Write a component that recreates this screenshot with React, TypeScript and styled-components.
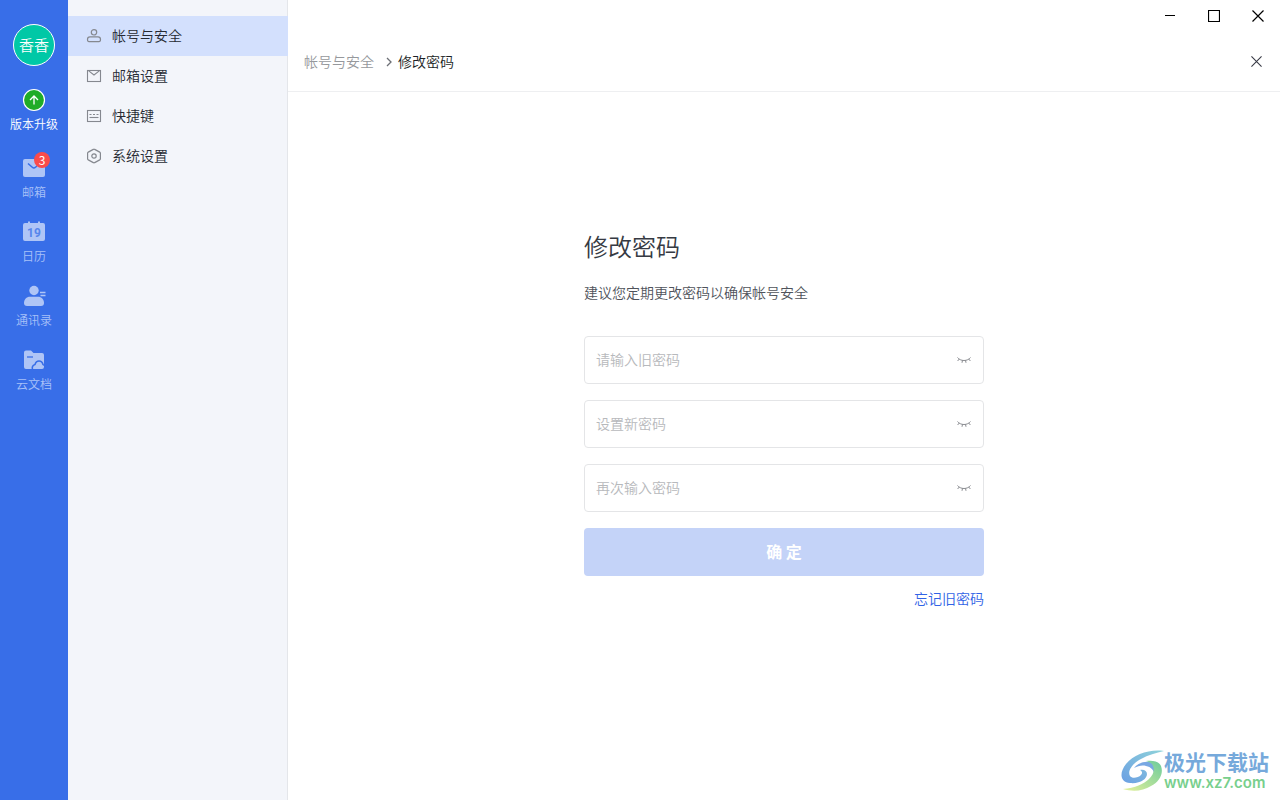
import React from 'react';
import styled, { createGlobalStyle } from 'styled-components';

const GlobalStyle = createGlobalStyle`
  * { box-sizing: border-box; }
  body {
    margin: 0;
    background: #fff;
    color: #262a33;
    font: 350 14px/20px "Noto Sans CJK SC", "Liberation Sans", sans-serif;
  }
  button, input { font: inherit; color: inherit; }
  button { padding: 0; border: 0; background: none; cursor: pointer; }
  a { text-decoration: none; }
  svg { display: block; flex: none; }
`;

const Page = styled.div`
  display: flex;
  min-height: 100vh;
`;

const Rail = styled.nav`
  flex: none;
  width: 68px;
  padding-top: 24px;
  display: flex;
  flex-direction: column;
  align-items: center;
  gap: 20px;
  background: #386ee8;
`;

const Avatar = styled.button`
  width: 42px;
  height: 42px;
  margin-bottom: 2px;
  border: 1px solid #fff;
  border-radius: 50%;
  background: #00c8a6;
  color: #fff;
  font-size: 15px;
  line-height: 38px;
`;

const RailButton = styled.button<{ $bright?: boolean }>`
  position: relative;
  display: flex;
  flex-direction: column;
  align-items: center;
  gap: 4px;
  width: 100%;
  margin-bottom: ${(p) => (p.$bright ? '4px' : '0')};
  color: ${(p) => (p.$bright ? '#fff' : '#a8c1f8')};
  font-size: 12px;
  line-height: 16px;
`;

const Badge = styled.span`
  position: absolute;
  top: -4px;
  left: 34px;
  width: 16px;
  height: 16px;
  border-radius: 8px;
  background: #fa4b4b;
  color: #fff;
  font-weight: 400;
`;

const Menu = styled.nav`
  flex: none;
  width: 220px;
  padding-top: 16px;
  background: #f3f5fa;
  box-shadow: inset -1px 0 #e4e6ea;
`;

const MenuItem = styled.button<{ $active?: boolean }>`
  display: flex;
  align-items: center;
  gap: 10px;
  width: 100%;
  height: 40px;
  padding-left: 18px;
  background: ${(p) => (p.$active ? '#d3e0fd' : 'transparent')};
  text-align: left;

  svg { color: #85888f; }
  span { padding-bottom: 2px; }
`;

const Content = styled.main`
  flex: 1;
  min-width: 0;
`;

const WindowBar = styled.div`
  display: flex;
  justify-content: flex-end;
  height: 32px;
`;

const WindowButton = styled.button`
  display: grid;
  place-items: center;
  width: 44px;
  color: #000;
`;

const Header = styled.header`
  display: flex;
  align-items: center;
  justify-content: space-between;
  height: 60px;
  padding: 0 16px;
  border-bottom: 1px solid #eeeff1;
`;

const Breadcrumb = styled.div`
  display: flex;
  align-items: center;
  gap: 10px;
  color: #1c1f26;

  a { color: #96989c; }
  a, span { padding-bottom: 2px; }
  svg { margin-right: -4px; color: #6c6f75; }
`;

const CloseButton = styled.button`
  display: grid;
  place-items: center;
  width: 16px;
  height: 16px;
  color: #383a45;
`;

const Form = styled.form`
  display: flex;
  flex-direction: column;
  gap: 16px;
  max-width: 400px;
  margin: 136px auto 0;
`;

const Title = styled.h1`
  margin: 0;
  color: #363a43;
  font-size: 24px;
  line-height: 36px;
  font-weight: 350;
`;

const Hint = styled.p`
  margin: 2px 0 18px;
  color: #4f535b;
`;

const Field = styled.div`
  display: flex;
  align-items: center;
  height: 48px;
  padding: 0 12px 0 11px;
  border: 1px solid #e4e5e7;
  border-radius: 4px;
`;

const Input = styled.input`
  flex: 1;
  min-width: 0;
  height: 100%;
  padding: 0 0 2px;
  border: 0;
  outline: 0;
  background: none;

  &::placeholder { color: #b7b9bc; opacity: 1; }
`;

const EyeButton = styled.button`
  color: #8b8d92;
`;

const Submit = styled.button`
  height: 48px;
  padding-bottom: 2px;
  border-radius: 4px;
  background: #c4d3f8;
  color: #fff;
  font-size: 16px;
  font-weight: 700;
`;

const Forgot = styled.a`
  align-self: flex-end;
  margin-top: -4px;
  color: #3163e6;
`;

const Watermark = styled.div`
  position: absolute;
  right: 11px;
  bottom: 7px;
  display: flex;
  align-items: center;
`;

const WatermarkText = styled.div`
  display: flex;
  flex-direction: column;
  margin-left: -1px;
  color: #76a9db;
  font-size: 21px;
  line-height: 24px;
  font-weight: 700;

  span {
    color: #78cf8d;
    font-family: Inter, "Liberation Sans", sans-serif;
    font-size: 15px;
    line-height: 20px;
    font-weight: 600;
  }
`;

const UpgradeIcon = () => (
  <svg width="24" height="24" viewBox="0 0 24 24" fill="none" stroke="#fff">
    <circle cx="12" cy="12" r="10.5" fill="#1fac27" strokeWidth="1.2" />
    <path d="M12 16.5V8.2M8 12l4-4 4 4" strokeWidth="1.3" />
  </svg>
);

const MailIcon = () => (
  <svg width="24" height="24" viewBox="0 0 24 24" fill="none">
    <rect x="1" y="3" width="22" height="18" rx="2" fill="#afc5f6" />
    <path d="M6 7.5l4.300 3.800a2.400 2.400 0 0 0 3.200 0L15 10" stroke="#386ee8" strokeWidth="1.500" />
  </svg>
);

const CalendarIcon = () => (
  <svg width="24" height="24" viewBox="0 0 24 24" fill="#afc5f6">
    <path d="M3 3h3V1.500h2V3h8V1.500h2V3h3a2 2 0 0 1 2 2v14a2 2 0 0 1-2 2H3a2 2 0 0 1-2-2V5a2 2 0 0 1 2-2z" />
    <text x="12" y="17" textAnchor="middle" fill="#5786ec" fontFamily="Roboto, sans-serif" fontSize="12" fontWeight="700">19</text>
  </svg>
);

const ContactsIcon = () => (
  <svg width="24" height="24" viewBox="0 0 24 24" fill="#afc5f6">
    <circle cx="12" cy="6.500" r="4.700" />
    <path d="M8 12.800h8c3.500 0 6 2.600 6 6.200 0 1.900-1 3-3 3H5c-2 0-3-1.100-3-3 0-3.600 2.500-6.200 6-6.200z" />
    <path d="M18 8.500h5.500M18.500 11.500h5" stroke="#afc5f6" strokeWidth="1.300" />
  </svg>
);

const CloudDocIcon = () => (
  <svg width="24" height="24" viewBox="0 0 24 24" fill="none">
    <path d="M2 4.500a2 2 0 0 1 2-2h5l2.500 2.500H20a2 2 0 0 1 2 2v12a2 2 0 0 1-2 2H4a2 2 0 0 1-2-2z" fill="#afc5f6" />
    <path d="M5 9h6" stroke="#386ee8" strokeWidth="1.300" />
    <path d="M10.500 21.500c-.7-2.500.7-4.400 2.500-5 .6-2.200 2-3.500 4-3.500 2.200 0 3.500 1.500 4 3.500l1.500 1" stroke="#386ee8" strokeWidth="1.500" />
  </svg>
);

const AccountIcon = () => (
  <svg width="16" height="16" viewBox="0 0 16 16" fill="none" stroke="currentColor" strokeWidth="1.200">
    <circle cx="8" cy="4.300" r="2.700" />
    <path d="M4 8.800h8c1.600 0 2.500 1 2.500 2.700 0 1.500-.5 2.200-1.500 2.200H3c-1 0-1.500-.7-1.500-2.200 0-1.700.9-2.700 2.500-2.700z" />
  </svg>
);

const EnvelopeIcon = () => (
  <svg width="16" height="16" viewBox="0 0 16 16" fill="none" stroke="currentColor" strokeWidth="1.100">
    <rect x="1.500" y="2.500" width="13" height="11" />
    <path d="M2.700 2.900L8 7l5.300-4.100" />
  </svg>
);

const KeyboardIcon = () => (
  <svg width="16" height="16" viewBox="0 0 16 16" fill="none" stroke="currentColor" strokeWidth="1.100">
    <rect x="1.500" y="2.500" width="13" height="11" />
    <path d="M3.500 6.500h9" strokeDasharray="2 1.500" />
    <path d="M3.500 9.500h9" />
  </svg>
);

const SystemIcon = () => (
  <svg width="16" height="16" viewBox="0 0 16 16" fill="none" stroke="currentColor" strokeWidth="1.200">
    <path d="M7.300 1.400q.7-.4 1.400 0l5 2.700q.7.400.7 1.200v5.400q0 .8-.7 1.200l-5 2.700q-.7.400-1.400 0l-5-2.700q-.7-.4-.7-1.200V5.300q0-.8.7-1.200z" />
    <circle cx="8" cy="8" r="2.200" />
  </svg>
);

const CrossIcon = ({ size }: { size: number }) => (
  <svg width={size} height={size} viewBox="0 0 12 12" fill="none" stroke="currentColor" strokeWidth="1.200">
    <path d="M.5.5l11 11M11.500.5l-11 11" />
  </svg>
);

const ClosedEyeIcon = () => (
  <svg width="14" height="8" viewBox="0 0 14 8" fill="none" stroke="currentColor">
    <path d="M.5 1.500C2 3.300 4.200 4.500 7 4.500s5-1.200 6.500-3M2.300 3L.6 5M11.700 3l1.700 2M5.500 4.300L5 6.800M8.500 4.300l.5 2.500" />
  </svg>
);

const WatermarkLogo = () => (
  <svg width="44" height="42" viewBox="0 0 44 42" fill="none">
    <defs>
      <linearGradient id="blueSwirl" x1="0" y1="1" x2="1" y2="0">
        <stop offset="0" stopColor="#6b9fe3" />
        <stop offset="1" stopColor="#8fd3da" />
      </linearGradient>
      <linearGradient id="greenSwirl" x1="0" y1="1" x2="1" y2="0">
        <stop offset="0" stopColor="#e5f19a" />
        <stop offset="1" stopColor="#6ccb9c" />
      </linearGradient>
    </defs>
    <path d="M43 1C29-1 13 4 5 14c-7 9-6 18 4 19 10 1 17-4 17-9 0-3-3-5-7-4 2 1 3 3 1 5-3 3-9 4-11 1-3-5 3-13 11-17C27 5 35 3 43 1z" fill="url(#blueSwirl)" />
    <path d="M13 18c4-5 12-8 19-5 6 3 5 8 1 11 0-4-3-7-8-8-4-1-8 0-12 2z" fill="#78a8e3" />
    <path d="M25 11c6-1 13 0 15 5 3 8-2 16-10 20-8 5-18 6-28 3 12-1 21-5 26-10 4-4 6-9 4-13-1-3-4-4-7-5z" fill="url(#greenSwirl)" />
  </svg>
);

const railItems = [
  { label: '邮箱', Icon: MailIcon, badge: 3 },
  { label: '日历', Icon: CalendarIcon },
  { label: '通讯录', Icon: ContactsIcon },
  { label: '云文档', Icon: CloudDocIcon },
];

const menuItems = [
  { label: '帐号与安全', Icon: AccountIcon, active: true },
  { label: '邮箱设置', Icon: EnvelopeIcon },
  { label: '快捷键', Icon: KeyboardIcon },
  { label: '系统设置', Icon: SystemIcon },
];

const fields = ['请输入旧密码', '设置新密码', '再次输入密码'];

export default function App() {
  return (
    <>
      <GlobalStyle />
      <Page>
        <Rail>
          <Avatar>香香</Avatar>
          <RailButton $bright>
            <UpgradeIcon />
            版本升级
          </RailButton>
          {railItems.map(({ label, Icon, badge }) => (
            <RailButton key={label}>
              <Icon />
              {badge && <Badge>{badge}</Badge>}
              {label}
            </RailButton>
          ))}
        </Rail>
        <Menu>
          {menuItems.map(({ label, Icon, active }) => (
            <MenuItem key={label} $active={active}>
              <Icon />
              <span>{label}</span>
            </MenuItem>
          ))}
        </Menu>
        <Content>
          <WindowBar>
            <WindowButton aria-label="最小化">
              <svg width="10" height="12" viewBox="0 0 10 12"><path d="M0 5h10v1H0z" /></svg>
            </WindowButton>
            <WindowButton aria-label="最大化">
              <svg width="12" height="12" viewBox="0 0 12 12" fill="none" stroke="currentColor"><path d="M.5.5h11v11H.5z" strokeWidth="1.200" /></svg>
            </WindowButton>
            <WindowButton aria-label="关闭窗口"><CrossIcon size={12} /></WindowButton>
          </WindowBar>
          <Header>
            <Breadcrumb>
              <a href="#account">帐号与安全</a>
              <svg width="8" height="10" viewBox="0 0 8 10" fill="none" stroke="currentColor" strokeWidth="1.300"><path d="M3 1l4 4-4 4" /></svg>
              <span>修改密码</span>
            </Breadcrumb>
            <CloseButton aria-label="关闭"><CrossIcon size={11} /></CloseButton>
          </Header>
          <Form onSubmit={(e) => e.preventDefault()}>
            <Title>修改密码</Title>
            <Hint>建议您定期更改密码以确保帐号安全</Hint>
            {fields.map((text) => (
              <Field key={text}>
                <Input type="password" aria-label={text} placeholder={text} />
                <EyeButton type="button" aria-label="显示密码"><ClosedEyeIcon /></EyeButton>
              </Field>
            ))}
            <Submit type="submit">确 定</Submit>
            <Forgot href="#forgot">忘记旧密码</Forgot>
          </Form>
        </Content>
      </Page>
      <Watermark>
        <WatermarkLogo />
        <WatermarkText>
          极光下载站
          <span>www.xz7.com</span>
        </WatermarkText>
      </Watermark>
    </>
  );
}
